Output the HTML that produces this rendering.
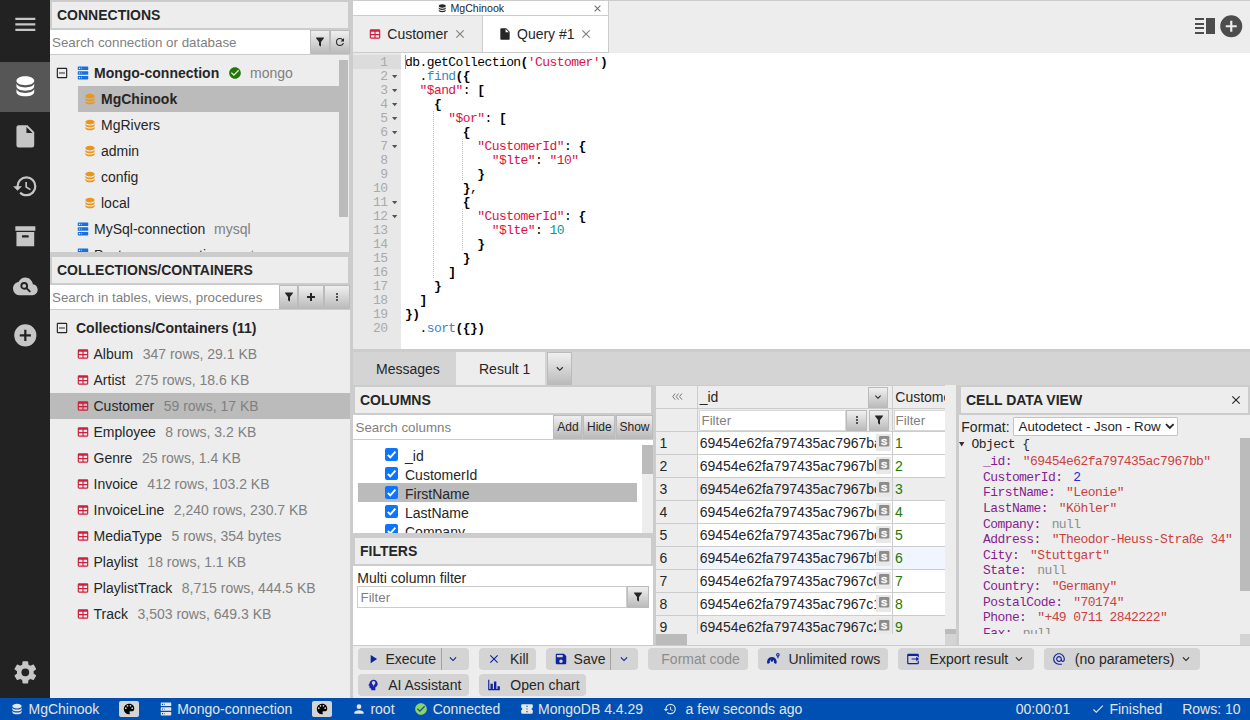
<!DOCTYPE html>
<html><head><meta charset="utf-8"><title>DbGate</title>
<style>
html,body{margin:0;padding:0}
body{width:1250px;height:720px;position:relative;overflow:hidden;background:#ededed;font-family:"Liberation Sans",sans-serif;font-size:14px;color:#262626;line-height:16px}
.b{position:absolute;box-sizing:border-box}
.t{position:absolute;white-space:nowrap;line-height:16px}
.ic{position:absolute;display:block;overflow:visible}
.bold{font-weight:bold}
.g{color:#808080}
.mono{font-family:"Liberation Mono",monospace}
.ttl{position:absolute;box-sizing:border-box;height:30px;border:2px solid #ccc;background:#ededed;padding:5px;font-weight:bold;line-height:16px;white-space:nowrap}
.ph{color:#7f7f7f;font-size:13.33px}
.code{position:absolute;left:405px;white-space:pre;font-family:"Liberation Mono",monospace;font-size:13px;letter-spacing:-0.577px;line-height:14px;height:14px;color:#000}
.code b{font-weight:bold}
.s{color:#d14}.n{color:#099}.f{color:#4183c4}
.ln{position:absolute;left:353px;width:34.4px;text-align:right;font-family:"Liberation Mono",monospace;font-size:13px;letter-spacing:-0.577px;line-height:14px;color:#aaa}
.j{position:absolute;white-space:pre;font-family:"Liberation Mono",monospace;font-size:13px;letter-spacing:-0.577px;line-height:15.6px;color:#262626}
.k{color:#871d8f}.js{color:#cb3f41}.jn{color:#3029cf}.nu{color:#8d8d8d}
.row{position:absolute;left:656px;width:289px;height:23px;box-sizing:border-box;border-top:1px solid #ccc;line-height:22px;white-space:nowrap;overflow:hidden}
.tb{position:absolute;box-sizing:border-box;background:#d4d4d4;border-radius:4px;height:21.5px}
.sb{color:#e4e4e4}
</style></head><body>

<svg width="0" height="0" style="position:absolute"><defs><symbol id="i-menu" viewBox="0 0 24 24"><path d="M3,6H21V8H3V6M3,11H21V13H3V11M3,16H21V18H3V16Z"/></symbol><symbol id="i-database" viewBox="0 0 24 24"><path d="M12,3C7.58,3 4,4.79 4,7C4,9.21 7.58,11 12,11C16.42,11 20,9.21 20,7C20,4.79 16.42,3 12,3M4,9V12C4,14.21 7.58,16 12,16C16.42,16 20,14.21 20,12V9C20,11.21 16.42,13 12,13C7.58,13 4,11.21 4,9M4,14V17C4,19.21 7.58,21 12,21C16.42,21 20,19.21 20,17V14C20,16.21 16.42,18 12,18C7.58,18 4,16.21 4,14Z"/></symbol><symbol id="i-file" viewBox="0 0 24 24"><path d="M13,9V3.5L18.5,9M6,2C4.89,2 4,2.89 4,4V20A2,2 0 0,0 6,22H18A2,2 0 0,0 20,20V8L14,2H6Z"/></symbol><symbol id="i-history" viewBox="0 0 24 24"><path d="M13.5,8H12V13L16.28,15.54L17,14.33L13.5,12.25V8M13,3A9,9 0 0,0 4,12H1L4.96,16.03L9,12H6A7,7 0 0,1 13,5A7,7 0 0,1 20,12A7,7 0 0,1 13,19C11.07,19 9.32,18.21 8.06,16.94L6.64,18.36C8.27,20 10.5,21 13,21A9,9 0 0,0 22,12A9,9 0 0,0 13,3"/></symbol><symbol id="i-archive" viewBox="0 0 24 24"><path d="M3,3H21V7H3V3M4,8H20V21H4V8M9.5,11A0.5,0.5 0 0,0 9,11.5V13H15V11.5A0.5,0.5 0 0,0 14.5,11H9.5Z"/></symbol><symbol id="i-cloud" viewBox="0 0 24 24"><path d="M19.35,10.03C18.67,6.59 15.64,4 12,4C9.11,4 6.6,5.64 5.35,8.03C2.34,8.36 0,10.9 0,14A6,6 0 0,0 6,20H19A5,5 0 0,0 24,15C24,12.36 21.95,10.22 19.35,10.03Z"/></symbol><symbol id="i-pluscircle" viewBox="0 0 24 24"><path d="M17,13H13V17H11V13H7V11H11V7H13V11H17M12,2A10,10 0 0,0 2,12A10,10 0 0,0 12,22A10,10 0 0,0 22,12A10,10 0 0,0 12,2Z"/></symbol><symbol id="i-cog" viewBox="0 0 24 24"><path d="M12,15.5A3.5,3.5 0 0,1 8.5,12A3.5,3.5 0 0,1 12,8.5A3.5,3.5 0 0,1 15.5,12A3.5,3.5 0 0,1 12,15.5M19.43,12.97C19.47,12.65 19.5,12.33 19.5,12C19.5,11.67 19.47,11.34 19.43,11L21.54,9.37C21.73,9.22 21.78,8.95 21.66,8.73L19.66,5.27C19.54,5.05 19.27,4.96 19.05,5.05L16.56,6.05C16.04,5.66 15.5,5.32 14.87,5.07L14.5,2.42C14.46,2.18 14.25,2 14,2H10C9.75,2 9.54,2.18 9.5,2.42L9.13,5.07C8.5,5.32 7.96,5.66 7.44,6.05L4.95,5.05C4.73,4.96 4.46,5.05 4.34,5.27L2.34,8.73C2.21,8.95 2.27,9.22 2.46,9.37L4.57,11C4.53,11.34 4.5,11.67 4.5,12C4.5,12.33 4.53,12.65 4.57,12.97L2.46,14.63C2.27,14.78 2.21,15.05 2.34,15.27L4.34,18.73C4.46,18.95 4.73,19.03 4.95,18.95L7.44,17.94C7.96,18.34 8.5,18.68 9.13,18.93L9.5,21.58C9.54,21.82 9.75,22 10,22H14C14.25,22 14.46,21.82 14.5,21.58L14.87,18.93C15.5,18.67 16.04,18.34 16.56,17.94L19.05,18.95C19.27,19.03 19.54,18.95 19.66,18.73L21.66,15.27C21.78,15.05 21.73,14.78 21.54,14.63L19.43,12.97Z"/></symbol><symbol id="i-server" viewBox="0 0 24 24"><path d="M4,1H20A1,1 0 0,1 21,2V6A1,1 0 0,1 20,7H4A1,1 0 0,1 3,6V2A1,1 0 0,1 4,1M4,9H20A1,1 0 0,1 21,10V14A1,1 0 0,1 20,15H4A1,1 0 0,1 3,14V10A1,1 0 0,1 4,9M4,17H20A1,1 0 0,1 21,18V22A1,1 0 0,1 20,23H4A1,1 0 0,1 3,22V18A1,1 0 0,1 4,17M9,5H10V3H9V5M9,13H10V11H9V13M9,21H10V19H9V21M5,3V5H7V3H5M5,11V13H7V11H5M5,19V21H7V19H5Z"/></symbol><symbol id="i-filter" viewBox="0 0 24 24"><path d="M14,12V19.88C14.04,20.18 13.94,20.5 13.71,20.71C13.32,21.1 12.69,21.1 12.3,20.71L10.29,18.7C10.06,18.47 9.96,18.16 10,17.87V12H9.97L4.21,4.62C3.87,4.19 3.95,3.56 4.38,3.22C4.57,3.08 4.78,3 5,3V3H19V3C19.22,3 19.43,3.08 19.62,3.22C20.05,3.56 20.13,4.19 19.79,4.62L14.03,12H14Z"/></symbol><symbol id="i-refresh" viewBox="0 0 24 24"><path d="M17.65,6.35C16.2,4.9 14.21,4 12,4A8,8 0 0,0 4,12A8,8 0 0,0 12,20C15.73,20 18.84,17.45 19.73,14H17.65C16.83,16.33 14.61,18 12,18A6,6 0 0,1 6,12A6,6 0 0,1 12,6C13.66,6 15.14,6.69 16.22,7.78L13,11H20V4L17.65,6.35Z"/></symbol><symbol id="i-checkcircle" viewBox="0 0 24 24"><path d="M12 2C6.5 2 2 6.5 2 12S6.5 22 12 22 22 17.5 22 12 17.5 2 12 2M10 17L5 12L6.41 10.59L10 14.17L17.59 6.58L19 8L10 17Z"/></symbol><symbol id="i-minusbox" viewBox="0 0 24 24"><path d="M19,19V5H5V19H19M19,3A2,2 0 0,1 21,5V19A2,2 0 0,1 19,21H5A2,2 0 0,1 3,19V5C3,3.89 3.9,3 5,3H19M17,11V13H7V11H17Z"/></symbol><symbol id="i-table" viewBox="0 0 24 24"><path d="M5,4H19A2,2 0 0,1 21,6V18A2,2 0 0,1 19,20H5A2,2 0 0,1 3,18V6A2,2 0 0,1 5,4M5,8V12H11V8H5M13,8V12H19V8H13M5,14V18H11V14H5M13,14V18H19V14H13Z"/></symbol><symbol id="i-close" viewBox="0 0 24 24"><path d="M19,6.41L17.59,5L12,10.59L6.41,5L5,6.41L10.59,12L5,17.59L6.41,19L12,13.41L17.59,19L19,17.59L13.41,12L19,6.41Z"/></symbol><symbol id="i-plus" viewBox="0 0 24 24"><path d="M19,13H13V19H11V13H5V11H11V5H13V11H19V13Z"/></symbol><symbol id="i-plusthick" viewBox="0 0 24 24"><path d="M20 14H14V20H10V14H4V10H10V4H14V10H20V14Z"/></symbol><symbol id="i-dots" viewBox="0 0 24 24"><path d="M12,16A2,2 0 0,1 14,18A2,2 0 0,1 12,20A2,2 0 0,1 10,18A2,2 0 0,1 12,16M12,10A2,2 0 0,1 14,12A2,2 0 0,1 12,14A2,2 0 0,1 10,12A2,2 0 0,1 12,10M12,4A2,2 0 0,1 14,6A2,2 0 0,1 12,8A2,2 0 0,1 10,6A2,2 0 0,1 12,4Z"/></symbol><symbol id="i-chevdown" viewBox="0 0 24 24"><path d="M7.41,8.58L12,13.17L16.59,8.58L18,10L12,16L6,10L7.41,8.58Z"/></symbol><symbol id="i-play" viewBox="0 0 24 24"><path d="M8,5.14V19.14L19,12.14L8,5.14Z"/></symbol><symbol id="i-save" viewBox="0 0 24 24"><path d="M15,9H5V5H15M12,19A3,3 0 0,1 9,16A3,3 0 0,1 12,13A3,3 0 0,1 15,16A3,3 0 0,1 12,19M17,3H5C3.89,3 3,3.9 3,5V19A2,2 0 0,0 5,21H19A2,2 0 0,0 21,19V7L17,3Z"/></symbol><symbol id="i-palette" viewBox="0 0 24 24"><path d="M17.5,12A1.5,1.5 0 0,1 16,10.5A1.5,1.5 0 0,1 17.5,9A1.5,1.5 0 0,1 19,10.5A1.5,1.5 0 0,1 17.5,12M14.5,8A1.5,1.5 0 0,1 13,6.5A1.5,1.5 0 0,1 14.5,5A1.5,1.5 0 0,1 16,6.5A1.5,1.5 0 0,1 14.5,8M9.5,8A1.5,1.5 0 0,1 8,6.5A1.5,1.5 0 0,1 9.5,5A1.5,1.5 0 0,1 11,6.5A1.5,1.5 0 0,1 9.5,8M6.5,12A1.5,1.5 0 0,1 5,10.5A1.5,1.5 0 0,1 6.5,9A1.5,1.5 0 0,1 8,10.5A1.5,1.5 0 0,1 6.5,12M12,3A9,9 0 0,0 3,12A9,9 0 0,0 12,21A1.5,1.5 0 0,0 13.5,19.5C13.5,19.11 13.35,18.76 13.11,18.5C12.88,18.23 12.73,17.88 12.73,17.5A1.5,1.5 0 0,1 14.23,16H16A5,5 0 0,0 21,11C21,6.58 16.97,3 12,3Z"/></symbol><symbol id="i-account" viewBox="0 0 24 24"><path d="M12,4A4,4 0 0,1 16,8A4,4 0 0,1 12,12A4,4 0 0,1 8,8A4,4 0 0,1 12,4M12,14C16.42,14 20,15.79 20,18V20H4V18C4,15.79 7.58,14 12,14Z"/></symbol><symbol id="i-check" viewBox="0 0 24 24"><path d="M21,7L9,19L3.5,13.5L4.91,12.09L9,16.17L19.59,5.59L21,7Z"/></symbol><symbol id="i-chartbar" viewBox="0 0 24 24"><path d="M22,21H2V3H4V19H6V10H10V19H12V6H16V19H18V14H22V21Z"/></symbol><symbol id="i-export" viewBox="0 0 24 24"><path d="M23,12L19,8V11H10V13H19V16M1,18V6C1,4.89 1.9,4 3,4H15A2,2 0 0,1 17,6V9H15V6H3V18H15V15H17V18A2,2 0 0,1 15,20H3A2,2 0 0,1 1,18Z"/></symbol><symbol id="i-at" viewBox="0 0 24 24"><path d="M12,15C12.81,15 13.5,14.7 14.11,14.11C14.7,13.5 15,12.81 15,12C15,11.19 14.7,10.5 14.11,9.89C13.5,9.3 12.81,9 12,9C11.19,9 10.5,9.3 9.89,9.89C9.3,10.5 9,11.19 9,12C9,12.81 9.3,13.5 9.89,14.11C10.5,14.7 11.19,15 12,15M12,2C14.75,2 17.1,3 19.05,4.95C21,6.9 22,9.25 22,12V13.45C22,14.45 21.65,15.3 21,16C20.3,16.67 19.5,17 18.5,17C17.3,17 16.31,16.5 15.56,15.5C14.56,16.5 13.38,17 12,17C10.63,17 9.45,16.5 8.46,15.54C7.5,14.55 7,13.38 7,12C7,10.63 7.5,9.45 8.46,8.46C9.45,7.5 10.63,7 12,7C13.38,7 14.55,7.5 15.54,8.46C16.5,9.45 17,10.63 17,12V13.45C17,13.86 17.16,14.22 17.46,14.53C17.76,14.84 18.11,15 18.5,15C18.92,15 19.27,14.84 19.57,14.53C19.87,14.22 20,13.86 20,13.45V12C20,9.81 19.23,7.93 17.65,6.35C16.07,4.77 14.19,4 12,4C9.81,4 7.93,4.77 6.35,6.35C4.77,7.93 4,9.81 4,12C4,14.19 4.77,16.07 6.35,17.65C7.93,19.23 9.81,20 12,20H17V22H12C9.25,22 6.9,21 4.95,19.05C3,17.1 2,14.75 2,12C2,9.25 3,6.9 4.95,4.95C6.9,3 9.25,2 12,2Z"/></symbol><symbol id="i-appexport" viewBox="0 0 24 24"><path d="M4,3H20A2,2 0 0,1 22,5V9.2H20V7H4V19H20V14.8H22V19A2,2 0 0,1 20,21H4A2,2 0 0,1 2,19V5A2,2 0 0,1 4,3ZM9.5,11H17.5V8L22.5,12L17.5,16V13H9.5Z"/></symbol><symbol id="i-headbulb" viewBox="0 0 24 24"><path d="M13 3C9.23 3 6.19 5.95 6 9.66L4.08 12.19C3.84 12.5 4.08 13 4.5 13H6V16C6 17.11 6.89 18 8 18H9V21H16V16.31C18.37 15.19 20 12.8 20 10C20 6.14 16.88 3 13 3M14 14H12V13H14V14M15.13 10.16C14.73 10.64 14.3 11.13 14.14 12H11.87C11.7 11.13 11.27 10.64 10.87 10.16C10.43 9.64 10 9.13 10 8.25C10 6.18 11.34 5 13 5S16 6.18 16 8.25C16 9.13 15.57 9.64 15.13 10.16Z"/></symbol><symbol id="i-ticket" viewBox="0 0 24 24"><path d="M4,4A2,2 0 0,0 2,6V10A2,2 0 0,1 4,12A2,2 0 0,1 2,14V18A2,2 0 0,0 4,20H20A2,2 0 0,0 22,18V14A2,2 0 0,1 20,12A2,2 0 0,1 22,10V6A2,2 0 0,0 20,4H4M13,17.5H11V15.5H13V17.5M13,13H11V11H13V13M13,8.5H11V6.5H13V8.5Z"/></symbol></defs></svg>
<div class="b" style="left:0px;top:0px;width:50px;height:698px;background:#222"></div>
<div class="b" style="left:0px;top:62px;width:50px;height:50px;background:#565656"></div>
<svg class="ic" style="left:11.66px;top:10.66px;width:26.67px;height:26.67px;fill:#c6c6c6;"><use href="#i-menu"/></svg>
<svg class="ic" style="left:11.66px;top:72.66px;width:26.67px;height:26.67px;fill:#fff;"><use href="#i-database"/></svg>
<svg class="ic" style="left:11.66px;top:122.66px;width:26.67px;height:26.67px;fill:#c6c6c6;"><use href="#i-file"/></svg>
<svg class="ic" style="left:11.66px;top:172.66px;width:26.67px;height:26.67px;fill:#c6c6c6;"><use href="#i-history"/></svg>
<svg class="ic" style="left:11.66px;top:222.66px;width:26.67px;height:26.67px;fill:#c6c6c6;"><use href="#i-archive"/></svg>
<svg class="ic" viewBox="0 0 24 24" preserveAspectRatio="none" style="left:12.75px;top:272.5px;width:24.7px;height:26.67px;fill:#c6c6c6"><path d="M19.35,10.03C18.67,6.59 15.64,4 12,4C9.11,4 6.6,5.64 5.35,8.03C2.34,8.36 0,10.9 0,14A6,6 0 0,0 6,20H19A5,5 0 0,0 24,15C24,12.36 21.95,10.22 19.35,10.03Z"/></svg>
<svg class="ic" style="left:11.9px;top:272.5px;width:26.67px;height:26.67px"><g transform="scale(1.111)" fill="none" stroke="#222" stroke-width="1.7"><circle cx="11" cy="11.6" r="2.6"/><path d="M13,13.6L16,16.6" stroke-linecap="round"/></g></svg>
<svg class="ic" style="left:11.66px;top:322.37px;width:26.67px;height:26.67px;fill:#c6c6c6;"><use href="#i-pluscircle"/></svg>
<svg class="ic" style="left:11.66px;top:658.66px;width:26.67px;height:26.67px;fill:#c6c6c6;"><use href="#i-cog"/></svg>
<div class="ttl" style="left:50px;top:0;width:300px">CONNECTIONS</div>
<div class="b" style="left:50px;top:30px;width:260px;height:24px;background:#fff"></div>
<div class="b" style="left:50px;top:54px;width:300px;height:1px;background:#ccc"></div>
<div class="t ph" style="left:52px;top:35px;">Search connection or database</div>
<div class="b" style="left:310px;top:30px;width:20px;height:24px;background:linear-gradient(to bottom,#ededed 5%,#bbb 100%);border:1px solid #bbb;box-sizing:border-box;"></div>
<svg class="ic" style="left:314.0px;top:36.0px;width:12px;height:12px;fill:#262626;"><use href="#i-filter"/></svg>
<div class="b" style="left:330px;top:30px;width:20px;height:24px;background:linear-gradient(to bottom,#ededed 5%,#bbb 100%);border:1px solid #bbb;box-sizing:border-box;"></div>
<svg class="ic" style="left:334.0px;top:36.0px;width:12px;height:12px;fill:#262626;"><use href="#i-refresh"/></svg>
<div class="b" style="left:50px;top:55px;width:300px;height:197px;overflow:hidden">
<div class="b" style="left:28px;top:31px;width:261px;height:26px;background:#bbb"></div>
<svg class="ic" style="left:5px;top:10.700000000000003px;width:14px;height:14px;fill:#262626;"><use href="#i-minusbox"/></svg>
<svg class="ic" style="left:26px;top:10.5px;width:14px;height:14px;fill:#1670e0;"><use href="#i-server"/></svg>
<div class="t bold" style="left:44px;top:10px;">Mongo-connection</div>
<svg class="ic" style="left:178px;top:11px;width:14px;height:14px;fill:#237804;"><use href="#i-checkcircle"/></svg>
<div class="t g" style="left:200px;top:10px;">mongo</div>
<svg class="ic" style="left:32.599999999999994px;top:36.7px;width:14px;height:14px;fill:#e8961e;"><use href="#i-database"/></svg>
<div class="t bold" style="left:51px;top:36px;">MgChinook</div>
<svg class="ic" style="left:32.599999999999994px;top:62.7px;width:14px;height:14px;fill:#e8961e;"><use href="#i-database"/></svg>
<div class="t " style="left:51px;top:62px;">MgRivers</div>
<svg class="ic" style="left:32.599999999999994px;top:88.69999999999999px;width:14px;height:14px;fill:#e8961e;"><use href="#i-database"/></svg>
<div class="t " style="left:51px;top:88px;">admin</div>
<svg class="ic" style="left:32.599999999999994px;top:114.69999999999999px;width:14px;height:14px;fill:#e8961e;"><use href="#i-database"/></svg>
<div class="t " style="left:51px;top:114px;">config</div>
<svg class="ic" style="left:32.599999999999994px;top:140.7px;width:14px;height:14px;fill:#e8961e;"><use href="#i-database"/></svg>
<div class="t " style="left:51px;top:140px;">local</div>
<svg class="ic" style="left:26px;top:166.5px;width:14px;height:14px;fill:#1670e0;"><use href="#i-server"/></svg>
<div class="t " style="left:44px;top:166px;">MySql-connection</div>
<div class="t g" style="left:164px;top:166px;">mysql</div>
<svg class="ic" style="left:26px;top:192.5px;width:14px;height:14px;fill:#1670e0;"><use href="#i-server"/></svg>
<div class="t " style="left:44px;top:192px;">Postgres-connection</div>
<div class="t g" style="left:178px;top:192px;">postgres</div>
<div class="b" style="left:289.3px;top:5px;width:9.2px;height:157px;background:#bbb"></div>
<div class="b" style="left:298.5px;top:0px;width:1.5px;height:197px;background:#ccc"></div>
</div>
<div class="b" style="left:50px;top:252px;width:300px;height:3px;background:#ccc"></div>
<div class="ttl" style="left:50px;top:255px;width:300px">COLLECTIONS/CONTAINERS</div>
<div class="b" style="left:50px;top:285px;width:229px;height:24px;background:#fff"></div>
<div class="b" style="left:50px;top:309px;width:300px;height:1px;background:#ccc"></div>
<div class="t ph" style="left:52px;top:290px;">Search in tables, views, procedures</div>
<div class="b" style="left:279px;top:285px;width:19px;height:24px;background:linear-gradient(to bottom,#ededed 5%,#bbb 100%);border:1px solid #bbb;box-sizing:border-box;"></div>
<svg class="ic" style="left:282.5px;top:291.0px;width:12px;height:12px;fill:#262626;"><use href="#i-filter"/></svg>
<div class="b" style="left:298px;top:285px;width:26px;height:24px;background:linear-gradient(to bottom,#ededed 5%,#bbb 100%);border:1px solid #bbb;box-sizing:border-box;"></div>
<svg class="ic" style="left:305.0px;top:291.0px;width:12px;height:12px;fill:#262626;"><use href="#i-plusthick"/></svg>
<div class="b" style="left:324px;top:285px;width:26px;height:24px;background:linear-gradient(to bottom,#ededed 5%,#bbb 100%);border:1px solid #bbb;box-sizing:border-box;"></div>
<svg class="ic" style="left:331.0px;top:291.0px;width:12px;height:12px;fill:#262626;"><use href="#i-dots"/></svg>
<div class="b" style="left:50px;top:393px;width:300px;height:26px;background:#bbb"></div>
<svg class="ic" style="left:55px;top:320.7px;width:14px;height:14px;fill:#262626;"><use href="#i-minusbox"/></svg>
<div class="t bold" style="left:76px;top:320px;">Collections/Containers (11)</div>
<svg class="ic" style="left:76px;top:346.8px;width:14px;height:14px;fill:#cf1f3c;"><use href="#i-table"/></svg>
<div class="t" style="left:93.5px;top:346px">Album<span class="g" style="margin-left:9.5px">347 rows, 29.1 KB</span></div>
<svg class="ic" style="left:76px;top:372.8px;width:14px;height:14px;fill:#cf1f3c;"><use href="#i-table"/></svg>
<div class="t" style="left:93.5px;top:372px">Artist<span class="g" style="margin-left:9.5px">275 rows, 18.6 KB</span></div>
<svg class="ic" style="left:76px;top:398.8px;width:14px;height:14px;fill:#cf1f3c;"><use href="#i-table"/></svg>
<div class="t" style="left:93.5px;top:398px">Customer<span class="g" style="margin-left:9.5px">59 rows, 17 KB</span></div>
<svg class="ic" style="left:76px;top:424.8px;width:14px;height:14px;fill:#cf1f3c;"><use href="#i-table"/></svg>
<div class="t" style="left:93.5px;top:424px">Employee<span class="g" style="margin-left:9.5px">8 rows, 3.2 KB</span></div>
<svg class="ic" style="left:76px;top:450.8px;width:14px;height:14px;fill:#cf1f3c;"><use href="#i-table"/></svg>
<div class="t" style="left:93.5px;top:450px">Genre<span class="g" style="margin-left:9.5px">25 rows, 1.4 KB</span></div>
<svg class="ic" style="left:76px;top:476.8px;width:14px;height:14px;fill:#cf1f3c;"><use href="#i-table"/></svg>
<div class="t" style="left:93.5px;top:476px">Invoice<span class="g" style="margin-left:9.5px">412 rows, 103.2 KB</span></div>
<svg class="ic" style="left:76px;top:502.8px;width:14px;height:14px;fill:#cf1f3c;"><use href="#i-table"/></svg>
<div class="t" style="left:93.5px;top:502px">InvoiceLine<span class="g" style="margin-left:9.5px">2,240 rows, 230.7 KB</span></div>
<svg class="ic" style="left:76px;top:528.8px;width:14px;height:14px;fill:#cf1f3c;"><use href="#i-table"/></svg>
<div class="t" style="left:93.5px;top:528px">MediaType<span class="g" style="margin-left:9.5px">5 rows, 354 bytes</span></div>
<svg class="ic" style="left:76px;top:554.8px;width:14px;height:14px;fill:#cf1f3c;"><use href="#i-table"/></svg>
<div class="t" style="left:93.5px;top:554px">Playlist<span class="g" style="margin-left:9.5px">18 rows, 1.1 KB</span></div>
<svg class="ic" style="left:76px;top:580.8px;width:14px;height:14px;fill:#cf1f3c;"><use href="#i-table"/></svg>
<div class="t" style="left:93.5px;top:580px">PlaylistTrack<span class="g" style="margin-left:9.5px">8,715 rows, 444.5 KB</span></div>
<svg class="ic" style="left:76px;top:606.8px;width:14px;height:14px;fill:#cf1f3c;"><use href="#i-table"/></svg>
<div class="t" style="left:93.5px;top:606px">Track<span class="g" style="margin-left:9.5px">3,503 rows, 649.3 KB</span></div>
<div class="b" style="left:350px;top:0px;width:3px;height:698px;background:#ccc"></div>
<div class="b" style="left:353px;top:0px;width:897px;height:1px;background:#ccc"></div>
<div class="b" style="left:353px;top:1px;width:256px;height:15px;background:#fff;border-right:1px solid #ccc;border-bottom:1px solid #ccc"></div>
<svg class="ic" style="left:436.55px;top:2.75px;width:10.5px;height:10.5px;fill:#262626;"><use href="#i-database"/></svg>
<div class="t " style="left:450.5px;top:2px;font-size:10.6px;line-height:12px">MgChinook</div>
<svg class="ic" style="left:591.7px;top:2.7px;width:11px;height:11px;fill:#666;"><use href="#i-close"/></svg>
<div class="b" style="left:353px;top:16px;width:130px;height:37px;background:#ededed;border-right:1px solid #ccc;border-bottom:1px solid #ccc"></div>
<div class="b" style="left:483px;top:16px;width:126px;height:37px;background:#fff;border-right:1px solid #ccc;border-bottom:1px solid #ccc"></div>
<svg class="ic" style="left:368px;top:26.7px;width:14px;height:14px;fill:#cf1f3c;"><use href="#i-table"/></svg>
<div class="t " style="left:387.3px;top:26px;">Customer</div>
<svg class="ic" style="left:453px;top:27px;width:14px;height:14px;fill:#808080;"><use href="#i-close"/></svg>
<svg class="ic" style="left:497.6px;top:27px;width:14px;height:14px;fill:#262626;"><use href="#i-file"/></svg>
<div class="t " style="left:517px;top:26px;">Query #1</div>
<svg class="ic" style="left:579.4px;top:27px;width:14px;height:14px;fill:#808080;"><use href="#i-close"/></svg>
<div class="b" style="left:1195px;top:18.4px;width:8.9px;height:1.9px;background:#4d4d4d"></div>
<div class="b" style="left:1195px;top:22.9px;width:8.9px;height:1.9px;background:#4d4d4d"></div>
<div class="b" style="left:1195px;top:27.4px;width:8.9px;height:1.9px;background:#4d4d4d"></div>
<div class="b" style="left:1195px;top:31.9px;width:8.9px;height:1.9px;background:#4d4d4d"></div>
<div class="b" style="left:1206.2px;top:18.4px;width:8.7px;height:15.4px;background:#4d4d4d"></div>
<svg class="ic" style="left:1218.15px;top:12.65px;width:26.5px;height:26.5px;fill:#4d4d4d;"><use href="#i-pluscircle"/></svg>
<div class="b" style="left:353px;top:53px;width:897px;height:296px;background:#fff"></div>
<div class="b" style="left:353px;top:53px;width:48px;height:296px;background:#e8e8e8"></div>
<div class="b" style="left:353px;top:54.5px;width:48px;height:14px;background:#dcdcdc"></div>
<div class="ln" style="top:55.8px">1</div>
<div class="code" style="top:55.8px">db.getCollection<b>(</b><span class=s>'Customer'</span><b>)</b></div>
<div class="ln" style="top:69.8px">2</div>
<svg class="ic" style="left:392px;top:75.1px;width:5.4px;height:3.2px;fill:#555"><path d="M0,0H5.4L2.7,3.2Z"/></svg>
<div class="code" style="top:69.8px">  .<span class=f>find</span><b>({</b></div>
<div class="ln" style="top:83.8px">3</div>
<svg class="ic" style="left:392px;top:89.1px;width:5.4px;height:3.2px;fill:#555"><path d="M0,0H5.4L2.7,3.2Z"/></svg>
<div class="code" style="top:83.8px">  <span class=s>"$and"</span>: <b>[</b></div>
<div class="ln" style="top:97.8px">4</div>
<svg class="ic" style="left:392px;top:103.1px;width:5.4px;height:3.2px;fill:#555"><path d="M0,0H5.4L2.7,3.2Z"/></svg>
<div class="code" style="top:97.8px">    <b>{</b></div>
<div class="ln" style="top:111.8px">5</div>
<svg class="ic" style="left:392px;top:117.1px;width:5.4px;height:3.2px;fill:#555"><path d="M0,0H5.4L2.7,3.2Z"/></svg>
<div class="code" style="top:111.8px">      <span class=s>"$or"</span>: <b>[</b></div>
<div class="ln" style="top:125.8px">6</div>
<svg class="ic" style="left:392px;top:131.1px;width:5.4px;height:3.2px;fill:#555"><path d="M0,0H5.4L2.7,3.2Z"/></svg>
<div class="code" style="top:125.8px">        <b>{</b></div>
<div class="ln" style="top:139.8px">7</div>
<svg class="ic" style="left:392px;top:145.1px;width:5.4px;height:3.2px;fill:#555"><path d="M0,0H5.4L2.7,3.2Z"/></svg>
<div class="code" style="top:139.8px">          <span class=s>"CustomerId"</span>: <b>{</b></div>
<div class="ln" style="top:153.8px">8</div>
<div class="code" style="top:153.8px">            <span class=s>"$lte"</span>: <span class=s>"10"</span></div>
<div class="ln" style="top:167.8px">9</div>
<div class="code" style="top:167.8px">          <b>}</b></div>
<div class="ln" style="top:181.8px">10</div>
<div class="code" style="top:181.8px">        <b>}</b>,</div>
<div class="ln" style="top:195.8px">11</div>
<svg class="ic" style="left:392px;top:201.1px;width:5.4px;height:3.2px;fill:#555"><path d="M0,0H5.4L2.7,3.2Z"/></svg>
<div class="code" style="top:195.8px">        <b>{</b></div>
<div class="ln" style="top:209.8px">12</div>
<svg class="ic" style="left:392px;top:215.1px;width:5.4px;height:3.2px;fill:#555"><path d="M0,0H5.4L2.7,3.2Z"/></svg>
<div class="code" style="top:209.8px">          <span class=s>"CustomerId"</span>: <b>{</b></div>
<div class="ln" style="top:223.8px">13</div>
<div class="code" style="top:223.8px">            <span class=s>"$lte"</span>: <span class=n>10</span></div>
<div class="ln" style="top:237.8px">14</div>
<div class="code" style="top:237.8px">          <b>}</b></div>
<div class="ln" style="top:251.8px">15</div>
<div class="code" style="top:251.8px">        <b>}</b></div>
<div class="ln" style="top:265.8px">16</div>
<div class="code" style="top:265.8px">      <b>]</b></div>
<div class="ln" style="top:279.8px">17</div>
<div class="code" style="top:279.8px">    <b>}</b></div>
<div class="ln" style="top:293.8px">18</div>
<div class="code" style="top:293.8px">  <b>]</b></div>
<div class="ln" style="top:307.8px">19</div>
<div class="code" style="top:307.8px"><b>})</b></div>
<div class="ln" style="top:321.8px">20</div>
<div class="code" style="top:321.8px">  .<span class=f>sort</span><b>({})</b></div>
<div class="b" style="left:433px;top:110.5px;width:1px;height:168px;background:repeating-linear-gradient(to bottom,#bdbdbd 0,#bdbdbd 1px,transparent 1px,transparent 2px)"></div>
<div class="b" style="left:462px;top:138.5px;width:1px;height:42px;background:repeating-linear-gradient(to bottom,#bdbdbd 0,#bdbdbd 1px,transparent 1px,transparent 2px)"></div>
<div class="b" style="left:462px;top:208.5px;width:1px;height:42px;background:repeating-linear-gradient(to bottom,#bdbdbd 0,#bdbdbd 1px,transparent 1px,transparent 2px)"></div>
<div class="b" style="left:405px;top:54.5px;width:1px;height:14px;background:#999"></div>
<div class="b" style="left:353px;top:349px;width:897px;height:3px;background:#ccc"></div>
<div class="b" style="left:353px;top:352px;width:897px;height:33px;background:#d4d4d4"></div>
<div class="b" style="left:455.6px;top:352px;width:89.6px;height:33px;background:#ededed"></div>
<div class="t " style="left:376px;top:361px;">Messages</div>
<div class="t " style="left:479px;top:361px;">Result 1</div>
<div class="b" style="left:546.5px;top:352px;width:25.5px;height:33px;background:linear-gradient(to bottom,#ededed 5%,#bbb 100%);border:1px solid #bbb;box-sizing:border-box;"></div>
<svg class="ic" style="left:552.5px;top:361.8px;width:13.6px;height:13.6px;fill:#262626;"><use href="#i-chevdown"/></svg>
<div class="b" style="left:353px;top:385px;width:897px;height:1px;background:#ccc"></div>
<div class="b" style="left:353px;top:385px;width:300px;height:260px;background:#fff"></div>
<div class="ttl" style="left:353px;top:385px;width:300px">COLUMNS</div>
<div class="t ph" style="left:355.5px;top:420px;">Search columns</div>
<div class="b" style="left:353px;top:439px;width:300px;height:1px;background:#ccc"></div>
<div class="b" style="left:553.4px;top:415px;width:99.6px;height:24px;background:#c6c6c6"></div>
<div class="b" style="left:553.4px;top:415px;width:28.6px;height:24px;background:linear-gradient(to bottom,#ededed 5%,#bbb 100%);border:1px solid #bbb;box-sizing:border-box;border-bottom-width:2px"></div>
<div class="t " style="left:557.3px;top:419px;font-size:12px">Add</div>
<div class="b" style="left:582.6px;top:415px;width:32.4px;height:24px;background:linear-gradient(to bottom,#ededed 5%,#bbb 100%);border:1px solid #bbb;box-sizing:border-box;border-bottom-width:2px"></div>
<div class="t " style="left:587px;top:419px;font-size:12px">Hide</div>
<div class="b" style="left:615.6px;top:415px;width:37.4px;height:24px;background:linear-gradient(to bottom,#ededed 5%,#bbb 100%);border:1px solid #bbb;box-sizing:border-box;border-bottom-width:2px"></div>
<div class="t " style="left:619.5px;top:419px;font-size:12px">Show</div>
<div class="b" style="left:353px;top:440px;width:300px;height:93px;overflow:hidden">
<div class="b" style="left:5px;top:43px;width:279px;height:19px;background:#bbb"></div>
<svg class="ic" style="left:32.2px;top:8.2px;width:13px;height:13px"><rect width="13" height="13" rx="2" fill="#0b75ff"/><path d="M2.8,6.8L5.3,9.4L10.4,3.6" fill="none" stroke="#fff" stroke-width="1.9"/></svg>
<div class="t " style="left:52px;top:8.2px;">_id</div>
<svg class="ic" style="left:32.2px;top:27.2px;width:13px;height:13px"><rect width="13" height="13" rx="2" fill="#0b75ff"/><path d="M2.8,6.8L5.3,9.4L10.4,3.6" fill="none" stroke="#fff" stroke-width="1.9"/></svg>
<div class="t " style="left:52px;top:27.2px;">CustomerId</div>
<svg class="ic" style="left:32.2px;top:46.2px;width:13px;height:13px"><rect width="13" height="13" rx="2" fill="#0b75ff"/><path d="M2.8,6.8L5.3,9.4L10.4,3.6" fill="none" stroke="#fff" stroke-width="1.9"/></svg>
<div class="t " style="left:52px;top:46.2px;">FirstName</div>
<svg class="ic" style="left:32.2px;top:65.2px;width:13px;height:13px"><rect width="13" height="13" rx="2" fill="#0b75ff"/><path d="M2.8,6.8L5.3,9.4L10.4,3.6" fill="none" stroke="#fff" stroke-width="1.9"/></svg>
<div class="t " style="left:52px;top:65.2px;">LastName</div>
<svg class="ic" style="left:32.2px;top:84.2px;width:13px;height:13px"><rect width="13" height="13" rx="2" fill="#0b75ff"/><path d="M2.8,6.8L5.3,9.4L10.4,3.6" fill="none" stroke="#fff" stroke-width="1.9"/></svg>
<div class="t " style="left:52px;top:84.2px;">Company</div>
<div class="b" style="left:289.2px;top:5px;width:10.8px;height:88px;background:#ededed"></div>
<div class="b" style="left:289.2px;top:5px;width:10.8px;height:29px;background:#bbb"></div>
</div>
<div class="b" style="left:353px;top:533px;width:300px;height:3px;background:#ccc"></div>
<div class="ttl" style="left:353px;top:536px;width:300px">FILTERS</div>
<div class="t " style="left:357.3px;top:570px;">Multi column filter</div>
<div class="b" style="left:357.4px;top:586px;width:270px;height:21.6px;background:#fff;border:1px solid #ccc"></div>
<div class="t ph" style="left:360.5px;top:590px;">Filter</div>
<div class="b" style="left:626.6px;top:586px;width:22px;height:21.6px;background:linear-gradient(to bottom,#ededed 5%,#bbb 100%);border:1px solid #bbb;box-sizing:border-box;"></div>
<svg class="ic" style="left:631.6px;top:590.5px;width:12px;height:12px;fill:#262626;"><use href="#i-filter"/></svg>
<div class="b" style="left:653px;top:385px;width:3px;height:260px;background:#ccc"></div>
<div class="b" style="left:656px;top:385px;width:300px;height:260px;background:#ededed"></div>
<div class="b" style="left:656px;top:385px;width:289px;height:249px;overflow:hidden;background:#fff">
<div class="b" style="left:0px;top:0px;width:289px;height:1px;background:#ccc"></div>
<div class="b" style="left:0px;top:1px;width:289px;height:46px;background:#ededed"></div>
<div class="b" style="left:0px;top:23px;width:289px;height:1px;background:#ccc"></div>
<svg class="ic" style="left:15.7px;top:8.3px;width:10.8px;height:7.2px" viewBox="0 0 11.5 8" preserveAspectRatio="none"><path d="M3.4,0.6L0.8,4L3.4,7.4M7,0.6L4.4,4L7,7.4M10.6,0.6L8,4L10.6,7.4" fill="none" stroke="#707070" stroke-width="1.05"/></svg>
<div class="t " style="left:43.7px;top:4px;">_id</div>
<div class="b" style="left:211.9px;top:2px;width:20.6px;height:20.6px;background:linear-gradient(to bottom,#ededed 5%,#bbb 100%);border:1px solid #bbb;box-sizing:border-box;"></div>
<svg class="ic" style="left:216.3px;top:6.2px;width:12px;height:12px;fill:#262626;"><use href="#i-chevdown"/></svg>
<div class="t " style="left:239.3px;top:4px;">CustomerId</div>
<div class="b" style="left:42.5px;top:24.5px;width:147.5px;height:21px;background:#fff;border:1px solid #d8d8d8"></div>
<div class="t ph" style="left:45.5px;top:27.5px;">Filter</div>
<div class="b" style="left:190.3px;top:24.6px;width:20.6px;height:21.6px;background:linear-gradient(to bottom,#ededed 5%,#bbb 100%);border:1px solid #bbb;box-sizing:border-box;"></div>
<svg class="ic" style="left:194.6px;top:29.3px;width:12px;height:12px;fill:#262626;"><use href="#i-dots"/></svg>
<div class="b" style="left:212.9px;top:24.6px;width:20.6px;height:21.6px;background:linear-gradient(to bottom,#ededed 5%,#bbb 100%);border:1px solid #bbb;box-sizing:border-box;"></div>
<svg class="ic" style="left:217.2px;top:29.3px;width:12px;height:12px;fill:#262626;"><use href="#i-filter"/></svg>
<div class="b" style="left:237.5px;top:24.5px;width:60px;height:21px;background:#fff;border:1px solid #d8d8d8"></div>
<div class="t ph" style="left:239.6px;top:27.5px;">Filter</div>
<div class="b" style="left:0px;top:46px;width:289px;height:23px;background:#fff;border-top:1px solid #ccc"></div>
<div class="b" style="left:0px;top:47px;width:41px;height:22px;background:#ededed"></div>
<div class="t" style="left:3.5px;top:50px">1</div>
<div class="b" style="left:42px;top:47px;width:178.2px;height:22px;overflow:hidden"><div class="t" style="left:1.7px;top:3px">69454e62fa797435ac7967ba</div></div>
<div class="b" style="left:220.2px;top:48.5px;width:15.3px;height:17px;background:#e8e8e8"></div>
<svg class="ic" style="left:223.4px;top:51.3px;width:10.3px;height:10.5px"><rect width="10.3" height="10.5" rx="1.2" fill="#8c8c8c"/><text x="5.15" y="8.7" font-family="Liberation Sans" font-size="9.4" font-weight="bold" fill="#fff" stroke="#fff" stroke-width="0.3" text-anchor="middle">S</text></svg>
<div class="t" style="left:239px;top:50px;color:#237804">1</div>
<div class="b" style="left:0px;top:69px;width:289px;height:23px;background:#fff;border-top:1px solid #ccc"></div>
<div class="b" style="left:0px;top:70px;width:41px;height:22px;background:#ededed"></div>
<div class="t" style="left:3.5px;top:73px">2</div>
<div class="b" style="left:42px;top:70px;width:178.2px;height:22px;overflow:hidden"><div class="t" style="left:1.7px;top:3px">69454e62fa797435ac7967bb</div></div>
<div class="b" style="left:220.2px;top:71.5px;width:15.3px;height:17px;background:#e8e8e8"></div>
<svg class="ic" style="left:223.4px;top:74.3px;width:10.3px;height:10.5px"><rect width="10.3" height="10.5" rx="1.2" fill="#8c8c8c"/><text x="5.15" y="8.7" font-family="Liberation Sans" font-size="9.4" font-weight="bold" fill="#fff" stroke="#fff" stroke-width="0.3" text-anchor="middle">S</text></svg>
<div class="t" style="left:239px;top:73px;color:#237804">2</div>
<div class="b" style="left:0px;top:92px;width:289px;height:23px;background:#ededed;border-top:1px solid #ccc"></div>
<div class="b" style="left:0px;top:93px;width:41px;height:22px;background:#ededed"></div>
<div class="t" style="left:3.5px;top:96px">3</div>
<div class="b" style="left:42px;top:93px;width:178.2px;height:22px;overflow:hidden"><div class="t" style="left:1.7px;top:3px">69454e62fa797435ac7967bc</div></div>
<div class="b" style="left:220.2px;top:94.5px;width:15.3px;height:17px;background:#e8e8e8"></div>
<svg class="ic" style="left:223.4px;top:97.3px;width:10.3px;height:10.5px"><rect width="10.3" height="10.5" rx="1.2" fill="#8c8c8c"/><text x="5.15" y="8.7" font-family="Liberation Sans" font-size="9.4" font-weight="bold" fill="#fff" stroke="#fff" stroke-width="0.3" text-anchor="middle">S</text></svg>
<div class="t" style="left:239px;top:96px;color:#237804">3</div>
<div class="b" style="left:0px;top:115px;width:289px;height:23px;background:#fff;border-top:1px solid #ccc"></div>
<div class="b" style="left:0px;top:116px;width:41px;height:22px;background:#ededed"></div>
<div class="t" style="left:3.5px;top:119px">4</div>
<div class="b" style="left:42px;top:116px;width:178.2px;height:22px;overflow:hidden"><div class="t" style="left:1.7px;top:3px">69454e62fa797435ac7967bd</div></div>
<div class="b" style="left:220.2px;top:117.5px;width:15.3px;height:17px;background:#e8e8e8"></div>
<svg class="ic" style="left:223.4px;top:120.3px;width:10.3px;height:10.5px"><rect width="10.3" height="10.5" rx="1.2" fill="#8c8c8c"/><text x="5.15" y="8.7" font-family="Liberation Sans" font-size="9.4" font-weight="bold" fill="#fff" stroke="#fff" stroke-width="0.3" text-anchor="middle">S</text></svg>
<div class="t" style="left:239px;top:119px;color:#237804">4</div>
<div class="b" style="left:0px;top:138px;width:289px;height:23px;background:#fff;border-top:1px solid #ccc"></div>
<div class="b" style="left:0px;top:139px;width:41px;height:22px;background:#ededed"></div>
<div class="t" style="left:3.5px;top:142px">5</div>
<div class="b" style="left:42px;top:139px;width:178.2px;height:22px;overflow:hidden"><div class="t" style="left:1.7px;top:3px">69454e62fa797435ac7967be</div></div>
<div class="b" style="left:220.2px;top:140.5px;width:15.3px;height:17px;background:#e8e8e8"></div>
<svg class="ic" style="left:223.4px;top:143.3px;width:10.3px;height:10.5px"><rect width="10.3" height="10.5" rx="1.2" fill="#8c8c8c"/><text x="5.15" y="8.7" font-family="Liberation Sans" font-size="9.4" font-weight="bold" fill="#fff" stroke="#fff" stroke-width="0.3" text-anchor="middle">S</text></svg>
<div class="t" style="left:239px;top:142px;color:#237804">5</div>
<div class="b" style="left:0px;top:161px;width:289px;height:23px;background:#f0f5ff;border-top:1px solid #ccc"></div>
<div class="b" style="left:0px;top:162px;width:41px;height:22px;background:#ededed"></div>
<div class="t" style="left:3.5px;top:165px">6</div>
<div class="b" style="left:42px;top:162px;width:178.2px;height:22px;overflow:hidden"><div class="t" style="left:1.7px;top:3px">69454e62fa797435ac7967bf</div></div>
<div class="b" style="left:220.2px;top:163.5px;width:15.3px;height:17px;background:#e8e8e8"></div>
<svg class="ic" style="left:223.4px;top:166.3px;width:10.3px;height:10.5px"><rect width="10.3" height="10.5" rx="1.2" fill="#8c8c8c"/><text x="5.15" y="8.7" font-family="Liberation Sans" font-size="9.4" font-weight="bold" fill="#fff" stroke="#fff" stroke-width="0.3" text-anchor="middle">S</text></svg>
<div class="t" style="left:239px;top:165px;color:#237804">6</div>
<div class="b" style="left:0px;top:184px;width:289px;height:23px;background:#fff;border-top:1px solid #ccc"></div>
<div class="b" style="left:0px;top:185px;width:41px;height:22px;background:#ededed"></div>
<div class="t" style="left:3.5px;top:188px">7</div>
<div class="b" style="left:42px;top:185px;width:178.2px;height:22px;overflow:hidden"><div class="t" style="left:1.7px;top:3px">69454e62fa797435ac7967c0</div></div>
<div class="b" style="left:220.2px;top:186.5px;width:15.3px;height:17px;background:#e8e8e8"></div>
<svg class="ic" style="left:223.4px;top:189.3px;width:10.3px;height:10.5px"><rect width="10.3" height="10.5" rx="1.2" fill="#8c8c8c"/><text x="5.15" y="8.7" font-family="Liberation Sans" font-size="9.4" font-weight="bold" fill="#fff" stroke="#fff" stroke-width="0.3" text-anchor="middle">S</text></svg>
<div class="t" style="left:239px;top:188px;color:#237804">7</div>
<div class="b" style="left:0px;top:207px;width:289px;height:23px;background:#fff;border-top:1px solid #ccc"></div>
<div class="b" style="left:0px;top:208px;width:41px;height:22px;background:#ededed"></div>
<div class="t" style="left:3.5px;top:211px">8</div>
<div class="b" style="left:42px;top:208px;width:178.2px;height:22px;overflow:hidden"><div class="t" style="left:1.7px;top:3px">69454e62fa797435ac7967c1</div></div>
<div class="b" style="left:220.2px;top:209.5px;width:15.3px;height:17px;background:#e8e8e8"></div>
<svg class="ic" style="left:223.4px;top:212.3px;width:10.3px;height:10.5px"><rect width="10.3" height="10.5" rx="1.2" fill="#8c8c8c"/><text x="5.15" y="8.7" font-family="Liberation Sans" font-size="9.4" font-weight="bold" fill="#fff" stroke="#fff" stroke-width="0.3" text-anchor="middle">S</text></svg>
<div class="t" style="left:239px;top:211px;color:#237804">8</div>
<div class="b" style="left:0px;top:230px;width:289px;height:23px;background:#ededed;border-top:1px solid #ccc"></div>
<div class="b" style="left:0px;top:231px;width:41px;height:22px;background:#ededed"></div>
<div class="t" style="left:3.5px;top:234px">9</div>
<div class="b" style="left:42px;top:231px;width:178.2px;height:22px;overflow:hidden"><div class="t" style="left:1.7px;top:3px">69454e62fa797435ac7967c2</div></div>
<div class="b" style="left:220.2px;top:232.5px;width:15.3px;height:17px;background:#e8e8e8"></div>
<svg class="ic" style="left:223.4px;top:235.3px;width:10.3px;height:10.5px"><rect width="10.3" height="10.5" rx="1.2" fill="#8c8c8c"/><text x="5.15" y="8.7" font-family="Liberation Sans" font-size="9.4" font-weight="bold" fill="#fff" stroke="#fff" stroke-width="0.3" text-anchor="middle">S</text></svg>
<div class="t" style="left:239px;top:234px;color:#237804">9</div>
<div class="b" style="left:0px;top:253px;width:289px;height:23px;background:#fff;border-top:1px solid #ccc"></div>
<div class="b" style="left:0px;top:254px;width:41px;height:22px;background:#ededed"></div>
<div class="t" style="left:3.5px;top:257px">10</div>
<div class="b" style="left:42px;top:254px;width:178.2px;height:22px;overflow:hidden"><div class="t" style="left:1.7px;top:3px">69454e62fa797435ac7967c3</div></div>
<div class="b" style="left:220.2px;top:255.5px;width:15.3px;height:17px;background:#e8e8e8"></div>
<svg class="ic" style="left:223.4px;top:258.3px;width:10.3px;height:10.5px"><rect width="10.3" height="10.5" rx="1.2" fill="#8c8c8c"/><text x="5.15" y="8.7" font-family="Liberation Sans" font-size="9.4" font-weight="bold" fill="#fff" stroke="#fff" stroke-width="0.3" text-anchor="middle">S</text></svg>
<div class="t" style="left:239px;top:257px;color:#237804">10</div>
<div class="b" style="left:41px;top:0px;width:1px;height:249px;background:#ccc"></div>
<div class="b" style="left:236px;top:0px;width:1px;height:249px;background:#ccc"></div>
</div>
<div class="b" style="left:656px;top:634px;width:289px;height:11px;background:#ededed"></div>
<div class="b" style="left:656.4px;top:634.3px;width:30.3px;height:10.7px;background:#bbb"></div>
<div class="b" style="left:945px;top:629.3px;width:11px;height:4.7px;background:#bbb"></div>
<div class="b" style="left:945px;top:634px;width:11px;height:11px;background:#d4d4d4"></div>
<div class="b" style="left:956px;top:385px;width:3px;height:260px;background:#ccc"></div>
<div class="ttl" style="left:959px;top:385px;width:291px">CELL DATA VIEW</div>
<svg class="ic" style="left:1229.0px;top:392.8px;width:14px;height:14px;fill:#262626;"><use href="#i-close"/></svg>
<div class="t " style="left:961.3px;top:419px;">Format:</div>
<div class="b" style="left:1013.2px;top:417px;width:164.5px;height:18.7px;background:#fff;border:1px solid #c4c4c4;border-radius:1px"></div>
<div class="t " style="left:1018.5px;top:418.5px;font-size:13.33px">Autodetect - Json - Row</div>
<svg class="ic" style="left:1164.6px;top:423px;width:9.6px;height:6.6px" viewBox="0 0 9.6 6.6"><path d="M1,1.2L4.8,5L8.6,1.2" fill="none" stroke="#262626" stroke-width="1.9"/></svg>
<div class="b" style="left:959px;top:436px;width:280.5px;height:198px;overflow:hidden">
<svg class="ic" style="left:0.2px;top:6.4px;width:5.4px;height:4.4px;fill:#333"><path d="M0,0H5.4L2.7,4.4Z"/></svg>
<div class="j" style="left:12.6px;top:1.4000000000000001px">Object {</div>
<div class="j" style="left:24px;top:18.2px"><span class=k>_id:</span><span style="margin-left:3.6px"> </span><span class=js>"69454e62fa797435ac7967bb"</span></div>
<div class="j" style="left:24px;top:33.8px"><span class=k>CustomerId:</span><span style="margin-left:3.6px"> </span><span class=jn>2</span></div>
<div class="j" style="left:24px;top:49.4px"><span class=k>FirstName:</span><span style="margin-left:3.6px"> </span><span class=js>"Leonie"</span></div>
<div class="j" style="left:24px;top:65.0px"><span class=k>LastName:</span><span style="margin-left:3.6px"> </span><span class=js>"Köhler"</span></div>
<div class="j" style="left:24px;top:80.6px"><span class=k>Company:</span><span style="margin-left:3.6px"> </span><span class=nu>null</span></div>
<div class="j" style="left:24px;top:96.19999999999999px"><span class=k>Address:</span><span style="margin-left:3.6px"> </span><span class=js>"Theodor-Heuss-Straße 34"</span></div>
<div class="j" style="left:24px;top:111.8px"><span class=k>City:</span><span style="margin-left:3.6px"> </span><span class=js>"Stuttgart"</span></div>
<div class="j" style="left:24px;top:127.39999999999999px"><span class=k>State:</span><span style="margin-left:3.6px"> </span><span class=nu>null</span></div>
<div class="j" style="left:24px;top:143.0px"><span class=k>Country:</span><span style="margin-left:3.6px"> </span><span class=js>"Germany"</span></div>
<div class="j" style="left:24px;top:158.6px"><span class=k>PostalCode:</span><span style="margin-left:3.6px"> </span><span class=js>"70174"</span></div>
<div class="j" style="left:24px;top:174.2px"><span class=k>Phone:</span><span style="margin-left:3.6px"> </span><span class=js>"+49 0711 2842222"</span></div>
<div class="j" style="left:24px;top:189.79999999999998px"><span class=k>Fax:</span><span style="margin-left:3.6px"> </span><span class=nu>null</span></div>
<div class="j" style="left:24px;top:205.39999999999998px"><span class=k>Email:</span><span style="margin-left:3.6px"> </span><span class=js>"leonekohler@surfeu.de"</span></div>
</div>
<div class="b" style="left:1239.5px;top:436px;width:10.5px;height:198px;background:#ededed"></div>
<div class="b" style="left:1239.5px;top:438.3px;width:10.5px;height:153px;background:#bbb"></div>
<div class="b" style="left:1239.5px;top:634px;width:10.5px;height:11px;background:#d4d4d4"></div>
<div class="b" style="left:353px;top:645px;width:897px;height:1px;background:#ccc"></div>
<div class="tb" style="left:358px;top:648.2px;width:111px"></div>
<svg class="ic" style="left:365.8px;top:651.9000000000001px;width:14px;height:14px;fill:#10239e;"><use href="#i-play"/></svg>
<div class="t " style="left:385.4px;top:651.0px;">Execute</div>
<div class="b" style="left:441.4px;top:648.2px;width:1px;height:21.5px;background:#a2a2a2"></div>
<svg class="ic" style="left:446.2px;top:651.9000000000001px;width:14px;height:14px;fill:#10239e;"><use href="#i-chevdown"/></svg>
<div class="tb" style="left:479px;top:648.2px;width:57px"></div>
<svg class="ic" style="left:486.8px;top:651.9000000000001px;width:14px;height:14px;fill:#10239e;"><use href="#i-close"/></svg>
<div class="t " style="left:510px;top:651.0px;">Kill</div>
<div class="tb" style="left:546px;top:648.2px;width:91.5px"></div>
<svg class="ic" style="left:554.3px;top:651.9000000000001px;width:14px;height:14px;fill:#10239e;"><use href="#i-save"/></svg>
<div class="t " style="left:573.6px;top:651.0px;">Save</div>
<div class="b" style="left:610px;top:648.2px;width:1px;height:21.5px;background:#a2a2a2"></div>
<svg class="ic" style="left:616.5px;top:651.9000000000001px;width:14px;height:14px;fill:#10239e;"><use href="#i-chevdown"/></svg>
<div class="tb" style="left:648px;top:648.2px;width:99.8px"></div>
<div class="t " style="left:661.3px;top:651.0px;color:#8c8c8c">Format code</div>
<div class="tb" style="left:758px;top:648.2px;width:130px"></div>
<svg class="ic" style="left:765.6px;top:651.9000000000001px;width:14px;height:14px" viewBox="0 0 24 24"><path d="M4.9,19.6A6,6 0 1,1 15.3,19.6" fill="none" stroke="#10239e" stroke-width="4.4"/><path d="M10.1,14.4L13.2,10" stroke="#10239e" stroke-width="2.2"/><circle cx="10.1" cy="14.6" r="2.2" fill="#10239e"/><circle cx="20.4" cy="4.8" r="2.2" fill="none" stroke="#10239e" stroke-width="1.9"/><path d="M20.4,7.2V10.6" stroke="#10239e" stroke-width="1.9"/></svg>
<div class="t " style="left:788.5px;top:651.0px;">Unlimited rows</div>
<div class="tb" style="left:898px;top:648.2px;width:135.5px"></div>
<svg class="ic" style="left:906px;top:651.9000000000001px;width:14px;height:14px;fill:#10239e;"><use href="#i-appexport"/></svg>
<div class="t " style="left:929.6px;top:651.0px;">Export result</div>
<svg class="ic" style="left:1011.9px;top:651.9000000000001px;width:14px;height:14px;fill:#262626;"><use href="#i-chevdown"/></svg>
<div class="tb" style="left:1044px;top:648.2px;width:155.6px"></div>
<svg class="ic" style="left:1051.9px;top:651.9000000000001px;width:14px;height:14px;fill:#10239e;"><use href="#i-at"/></svg>
<div class="t " style="left:1074.8px;top:651.0px;">(no parameters)</div>
<svg class="ic" style="left:1178.9px;top:651.9000000000001px;width:14px;height:14px;fill:#262626;"><use href="#i-chevdown"/></svg>
<div class="tb" style="left:358px;top:674.3000000000001px;width:111px"></div>
<svg class="ic" style="left:366.3px;top:677.6px;width:14px;height:14px;fill:#1322b0;"><use href="#i-headbulb"/></svg>
<div class="t " style="left:388.2px;top:677.1px;">AI Assistant</div>
<div class="tb" style="left:479px;top:674.3000000000001px;width:107.3px"></div>
<svg class="ic" style="left:486.8px;top:678.0000000000001px;width:14px;height:14px;fill:#10239e;"><use href="#i-chartbar"/></svg>
<div class="t " style="left:510.3px;top:677.1px;">Open chart</div>
<div class="b" style="left:0px;top:698px;width:1250px;height:22px;background:#0050b3"></div>
<svg class="ic" style="left:10px;top:701.8px;width:14px;height:14px;fill:#e6e6e6;"><use href="#i-database"/></svg>
<div class="t sb" style="left:28.5px;top:701px;">MgChinook</div>
<div class="b" style="left:119px;top:701px;width:20px;height:16px;background:#d4d4d4;border-radius:2px"></div>
<svg class="ic" style="left:121.9px;top:702.0px;width:14px;height:14px;fill:#000;"><use href="#i-palette"/></svg>
<svg class="ic" style="left:158.6px;top:701.8px;width:14px;height:14px;fill:#e6e6e6;"><use href="#i-server"/></svg>
<div class="t sb" style="left:177.2px;top:701px;">Mongo-connection</div>
<div class="b" style="left:312px;top:701px;width:20px;height:16px;background:#d4d4d4;border-radius:2px"></div>
<svg class="ic" style="left:314.9px;top:702.0px;width:14px;height:14px;fill:#000;"><use href="#i-palette"/></svg>
<svg class="ic" style="left:352px;top:701.8px;width:14px;height:14px;fill:#e6e6e6;"><use href="#i-account"/></svg>
<div class="t sb" style="left:370.4px;top:701px;">root</div>
<svg class="ic" style="left:414.2px;top:701.8px;width:14px;height:14px;fill:#8fd45c;"><use href="#i-checkcircle"/></svg>
<div class="t sb" style="left:432.7px;top:701px;">Connected</div>
<svg class="ic" style="left:519.8px;top:701.8px;width:14px;height:14px;fill:#e6e6e6;"><use href="#i-ticket"/></svg>
<div class="t sb" style="left:538px;top:701px;">MongoDB 4.4.29</div>
<svg class="ic" style="left:663.3px;top:701.8px;width:14px;height:14px;fill:#e6e6e6;"><use href="#i-history"/></svg>
<div class="t sb" style="left:685.6px;top:701px;">a few seconds ago</div>
<div class="t sb" style="left:1015.7px;top:701px;">00:00:01</div>
<svg class="ic" style="left:1091px;top:701.8px;width:14px;height:14px;fill:#e6e6e6;"><use href="#i-check"/></svg>
<div class="t sb" style="left:1109.4px;top:701px;">Finished</div>
<div class="t sb" style="left:1182.2px;top:701px;">Rows: 10</div>
</body></html>
